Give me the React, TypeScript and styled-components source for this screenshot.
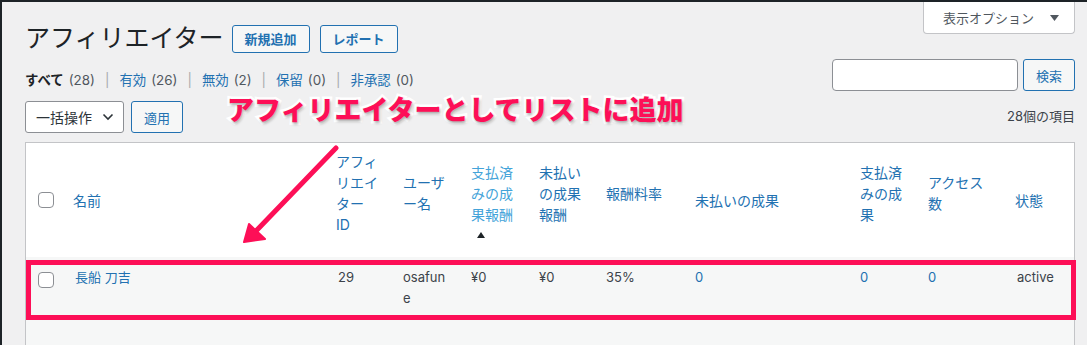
import styled, { createGlobalStyle } from "styled-components";

const GlobalStyle = createGlobalStyle`
  html, body { margin: 0; padding: 0; background: #f0f0f1; }
  body {
    font-family: Inter, "Noto Sans CJK JP", sans-serif;
    font-size: 13px;
    color: #3c434a;
  }
`;

const Page = styled.div`
  position: relative;
  width: 1087px;
  height: 345px;
  overflow: hidden;
  box-sizing: border-box;
  border-top: 2px solid #1d2327;
  border-left: 2px solid #1d2327;
  padding: 0 12px 0 23px;
  display: flex;
  flex-direction: column;
`;

const TopRow = styled.div`
  display: flex;
  justify-content: space-between;
  align-items: flex-start;
`;

const TitleGroup = styled.div`
  margin-top: 21px;
  display: flex;
  align-items: center;
  gap: 10px;
`;

const Title = styled.h1`
  margin: 0 -2px 0 0;
  font-size: 25px;
  font-weight: 400;
  line-height: 31px;
  color: #1d2327;
`;

const OutlineButton = styled.button`
  height: ${(p: { $h?: number }) => p.$h ?? 28}px;
  padding: 0 12px;
  border: 1px solid #2271b1;
  border-radius: 3px;
  background: #f6f7f7;
  color: #2271b1;
  font-family: inherit;
  font-size: 13px;
  font-weight: ${(p: { $bold?: boolean }) => (p.$bold ? 600 : 400)};
  white-space: nowrap;
`;

const ScreenOptions = styled.div`
  height: 31px;
  padding: 0 15px 0 19px;
  background: #fff;
  border: 1px solid #c3c4c7;
  border-top: none;
  border-radius: 0 0 4px 4px;
  display: flex;
  align-items: center;
  gap: 16px;
  color: #50575e;
  font-size: 13px;
`;

const FilterRow = styled.div`
  margin-top: 5px;
  display: flex;
  justify-content: space-between;
  align-items: flex-end;
`;

const Views = styled.ul`
  list-style: none;
  margin: 0;
  padding: 0;
  display: flex;
  line-height: 21px;
  font-size: 13.4px;
`;

const View = styled.li`
  color: ${(p: { $current?: boolean }) => (p.$current ? "#1d2327" : "#2271b1")};
  font-weight: ${(p: { $current?: boolean }) => (p.$current ? 600 : 400)};
`;

const Count = styled.span`
  color: #50575e;
  font-weight: 400;
  margin-left: 5px;
`;

const Sep = styled.li`
  color: #a7aaad;
  margin: 0 10px;
`;

const SearchBox = styled.div`
  display: flex;
  gap: 5px;
`;

const SearchInput = styled.div`
  width: 186px;
  height: 32px;
  box-sizing: border-box;
  border: 1px solid #8c8f94;
  border-radius: 4px;
  background: #fff;
`;

const NavRow = styled.div`
  margin-top: 10px;
  display: flex;
  justify-content: space-between;
  align-items: center;
`;

const BulkGroup = styled.div`
  display: flex;
  gap: 7px;
`;

const BulkSelect = styled.div`
  width: 99px;
  height: 32px;
  box-sizing: border-box;
  padding: 0 9px 0 10px;
  border: 1px solid #8c8f94;
  border-radius: 3px;
  background: #fff;
  display: flex;
  align-items: center;
  justify-content: space-between;
  color: #2c3338;
  font-size: 14px;
`;

const ItemCount = styled.span`
  margin-bottom: 4px;
  color: #3c434a;
  font-size: 13px;
`;

const Table = styled.table`
  margin-top: 9px;
  width: 100%;
  table-layout: fixed;
  border-collapse: separate;
  border-spacing: 0;
  border: 1px solid #c3c4c7;
  border-bottom: none;
  background: #fff;
`;

const Th = styled.th`
  padding: 8px 16px 8px 8px;
  text-align: left;
  vertical-align: middle;
  font-size: 14px;
  font-weight: 400;
  line-height: 21px;
  line-break: loose;
  color: ${(p: { $sorted?: boolean }) => (p.$sorted ? "#43a3d9" : "#2271b1")};
`;

const CheckTh = styled.th`
  padding: 0;
  vertical-align: middle;
`;

const SortIndicator = styled.span`
  display: block;
  height: 14px;
  position: relative;
  visibility: ${(p: { $show?: boolean }) => (p.$show ? "visible" : "hidden")};
  &::before {
    content: "";
    position: absolute;
    left: 6px;
    bottom: 1px;
    border-left: 4px solid transparent;
    border-right: 4px solid transparent;
    border-bottom: 6px solid #1d2327;
  }
`;

const Td = styled.td`
  padding: 10px 16px 8px ${(p: { $link?: boolean; $pad?: number }) => p.$pad ?? 8}px;
  vertical-align: top;
  font-size: 13px;
  line-height: 21px;
  overflow-wrap: anywhere;
  background: #f6f7f7;
  color: ${(p: { $link?: boolean }) => (p.$link ? "#2271b1" : "#3c434a")};
`;

const CheckTd = styled.td`
  padding: 15px 0 0 0;
  vertical-align: top;
  background: #f6f7f7;
`;

const FillerTd = styled.td`
  height: 40px;
  padding: 0;
  background: #f6f7f7;
`;

const Checkbox = styled.span`
  display: block;
  width: 16px;
  height: 16px;
  margin-left: 12px;
  box-sizing: border-box;
  border: 1px solid #8c8f94;
  border-radius: 4px;
  background: #fff;
`;

const HighlightBox = styled.div`
  position: absolute;
  left: 24px;
  top: 258px;
  width: 1050px;
  height: 60px;
  box-sizing: border-box;
  border: 5px solid #fd0f57;
  pointer-events: none;
`;

const Callout = styled.div`
  position: absolute;
  left: 225px;
  top: 92px;
  font-family: "Noto Sans CJK JP", sans-serif;
  font-size: 27px;
  font-weight: 900;
  line-height: 30px;
  color: #fd0f57;
  -webkit-text-stroke: 5px #fff;
  paint-order: stroke fill;
  text-shadow: 1px 2px 3px rgba(0, 0, 0, 0.35);
  white-space: nowrap;
`;

const ArrowSvg = styled.svg`
  position: absolute;
  left: 230px;
  top: 135px;
`;

type Col = { key: string; label: React.ReactNode; width: number; sortable?: boolean; sorted?: boolean };

const columns: Col[] = [
  { key: "name", label: "名前", width: 263 },
  { key: "id", label: <>アフィリエイター<br />ID</>, width: 67, sortable: true },
  { key: "user", label: "ユーザー名", width: 68, sortable: true },
  { key: "paid", label: "支払済みの成果報酬", width: 68, sortable: true, sorted: true },
  { key: "unpaid", label: "未払いの成果報酬", width: 67, sortable: true },
  { key: "rate", label: "報酬料率", width: 89, sortable: true },
  { key: "unpaidRef", label: "未払いの成果", width: 165 },
  { key: "paidRef", label: "支払済みの成果", width: 68, sortable: true },
  { key: "visits", label: "アクセス数", width: 87, sortable: true },
  { key: "status", label: "状態", width: 67 },
];

const row: { value: string; link?: boolean; pad?: number }[] = [
  { value: "長船 刀吉", link: true, pad: 10 },
  { value: "29", pad: 10 },
  { value: "osafune" },
  { value: "¥0" },
  { value: "¥0" },
  { value: "35%" },
  { value: "0", link: true },
  { value: "0", link: true },
  { value: "0", link: true },
  { value: "active", pad: 10 },
];

function App() {
  return (
    <>
      <GlobalStyle />
      <Page>
        <TopRow>
          <TitleGroup>
            <Title>アフィリエイター</Title>
            <OutlineButton $bold>新規追加</OutlineButton>
            <OutlineButton $bold>レポート</OutlineButton>
          </TitleGroup>
          <ScreenOptions>
            表示オプション
            <svg width="9" height="6" viewBox="0 0 9 6">
              <path d="M0 0h9L4.5 6z" fill="#50575e" />
            </svg>
          </ScreenOptions>
        </TopRow>

        <FilterRow>
          <Views>
            <View $current>すべて<Count>(28)</Count></View>
            <Sep>|</Sep>
            <View>有効<Count>(26)</Count></View>
            <Sep>|</Sep>
            <View>無効<Count>(2)</Count></View>
            <Sep>|</Sep>
            <View>保留<Count>(0)</Count></View>
            <Sep>|</Sep>
            <View>非承認<Count>(0)</Count></View>
          </Views>
          <SearchBox>
            <SearchInput />
            <OutlineButton $h={32}>検索</OutlineButton>
          </SearchBox>
        </FilterRow>

        <NavRow>
          <BulkGroup>
            <BulkSelect>
              一括操作
              <svg width="12" height="8" viewBox="0 0 12 8">
                <path d="M1.5 1.5 6 6l4.5-4.5" fill="none" stroke="#2c3338" strokeWidth="1.6" />
              </svg>
            </BulkSelect>
            <OutlineButton $h={32}>適用</OutlineButton>
          </BulkGroup>
          <ItemCount>28個の項目</ItemCount>
        </NavRow>

        <Table>
          <colgroup>
            <col style={{ width: 39 }} />
            {columns.map((c) => (
              <col key={c.key} style={{ width: c.width }} />
            ))}
          </colgroup>
          <thead>
            <tr>
              <CheckTh>
                <Checkbox />
              </CheckTh>
              {columns.map((c) => (
                <Th key={c.key} $sorted={c.sorted}>
                  {c.label}
                  {c.sortable && <SortIndicator $show={c.sorted} />}
                </Th>
              ))}
            </tr>
          </thead>
          <tbody>
            <tr>
              <CheckTd>
                <Checkbox />
              </CheckTd>
              {row.map((cell, i) => (
                <Td key={i} $link={cell.link} $pad={cell.pad}>
                  {cell.value}
                </Td>
              ))}
            </tr>
            <tr>
              <FillerTd colSpan={11} />
            </tr>
          </tbody>
        </Table>

        <HighlightBox />
        <Callout>アフィリエイターとしてリストに追加</Callout>
        <ArrowSvg width="120" height="120" viewBox="0 0 120 120">
          <path d="M104 11 24 94" stroke="#fd0f57" strokeWidth="5" strokeLinecap="round" fill="none" />
          <path d="M12 105 17 87 33 102z" fill="#fd0f57" stroke="#fd0f57" strokeWidth="2" strokeLinejoin="round" />
        </ArrowSvg>
      </Page>
    </>
  );
}

export default App;
